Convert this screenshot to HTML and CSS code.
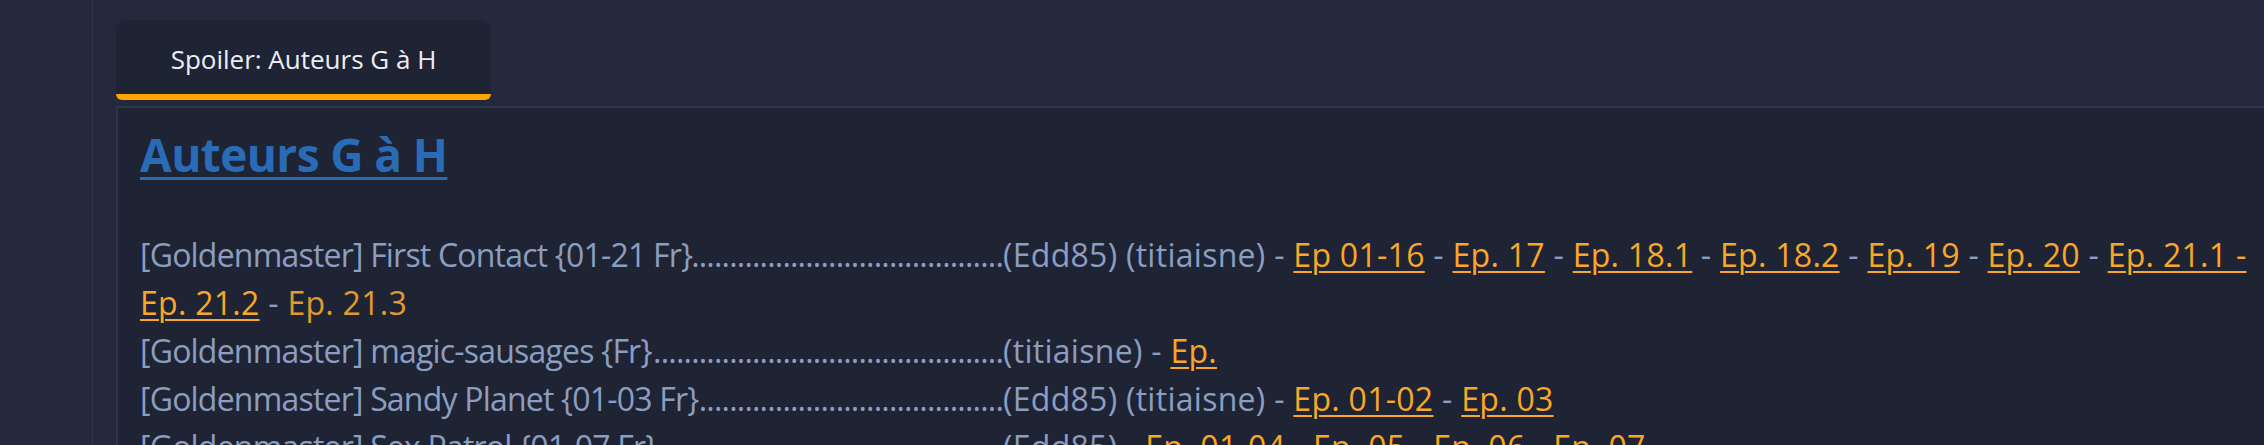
FILE: index.html
```html
<!DOCTYPE html>
<html lang="fr">
<head>
<meta charset="utf-8">
<title>Spoiler: Auteurs G à H</title>
<link rel="stylesheet" href="styles.css">
</head>
<body>
<div class="page">
  <aside class="sidebar"></aside>
  <main class="main">
    <div class="tabs">
      <button class="tab">Spoiler: Auteurs G à H</button>
    </div>
    <div class="box">
      <h2 class="heading"><a href="#">Auteurs G à H</a></h2>
      <div class="list">
        <div class="entry">
          <span class="title"><span class="name">[Goldenmaster] First Contact {01-21 Fr}</span><span class="leader">....................................................................................</span></span>(Edd85) (titiaisne) - <a href="#">Ep 01-16</a> - <a href="#">Ep. 17</a> - <a href="#">Ep. 18.1</a> - <a href="#">Ep. 18.2</a> - <a href="#">Ep. 19</a> - <a href="#">Ep. 20</a> - <a href="#">Ep. 21.1 -</a> <a href="#">Ep. 21.2</a> - <span class="plain-ep">Ep. 21.3</span>
        </div>
        <div class="entry">
          <span class="title"><span class="name">[Goldenmaster] magic-sausages {Fr}</span><span class="leader">....................................................................................</span></span>(titiaisne) - <a href="#">Ep.</a>
        </div>
        <div class="entry">
          <span class="title"><span class="name">[Goldenmaster] Sandy Planet {01-03 Fr}</span><span class="leader">....................................................................................</span></span>(Edd85) (titiaisne) - <a href="#">Ep. 01-02</a> - <a href="#">Ep. 03</a>
        </div>
        <div class="entry">
          <span class="title"><span class="name">[Goldenmaster] Sex Patrol {01-07 Fr}</span><span class="leader">....................................................................................</span></span>(Edd85) - <a href="#">Ep. 01-04</a> - <a href="#">Ep. 05</a> - <a href="#">Ep. 06</a> - <a href="#">Ep. 07</a>
        </div>
      </div>
    </div>
  </main>
</div>
</body>
</html>
```
FILE: styles.css
```css
html, body {
  margin: 0;
  padding: 0;
}
body {
  background: #24293e;
  overflow: hidden;
  font-family: "Open Sans", "Noto Sans", "DejaVu Sans", sans-serif;
}
.page {
  display: flex;
  min-height: 445px;
}
.sidebar {
  width: 92px;
  flex: none;
  border-right: 1px solid #2f3449;
}
.main {
  flex: 1;
  padding: 20px 0 0 23px;
  min-width: 0;
}
.tabs {
  display: flex;
}
.tab {
  width: 375px;
  height: 80px;
  box-sizing: border-box;
  background: #1f2435;
  border: none;
  border-bottom: 6px solid #ffa500;
  border-radius: 10px 10px 6px 6px;
  color: #eceef4;
  font-family: inherit;
  font-size: 26px;
  padding: 3px 0 0;
  display: flex;
  align-items: center;
  justify-content: center;
  cursor: pointer;
}
.box {
  margin-top: 6px;
  margin-right: -15px;
  background: #1f2435;
  border: 2px solid #2f3449;
  padding: 19px 22px 40px 22px;
}
.heading {
  margin: 0;
  font-size: 46px;
  line-height: 55px;
  font-weight: 700;
  letter-spacing: -0.6px;
}
.heading a {
  color: #296bb4;
  text-decoration: underline;
  text-decoration-thickness: 3px;
  text-underline-offset: 5px;
}
.list {
  margin-top: 49px;
  color: #8c9ec0;
  font-size: 32px;
  line-height: 48px;
  letter-spacing: 0.28px;
}
.entry a {
  color: #faa628;
  text-decoration: underline;
  text-decoration-thickness: 2px;
  text-underline-offset: 4px;
  white-space: nowrap;
}
.plain-ep {
  color: #e09b2d;
}
.title {
  display: inline-flex;
  width: 863px;
  align-items: baseline;
  white-space: nowrap;
  vertical-align: baseline;
  letter-spacing: -0.8px;
}
.name {
  flex: none;
}
.leader {
  flex: 1;
  min-width: 0;
  overflow: hidden;
  direction: rtl;
}
```
